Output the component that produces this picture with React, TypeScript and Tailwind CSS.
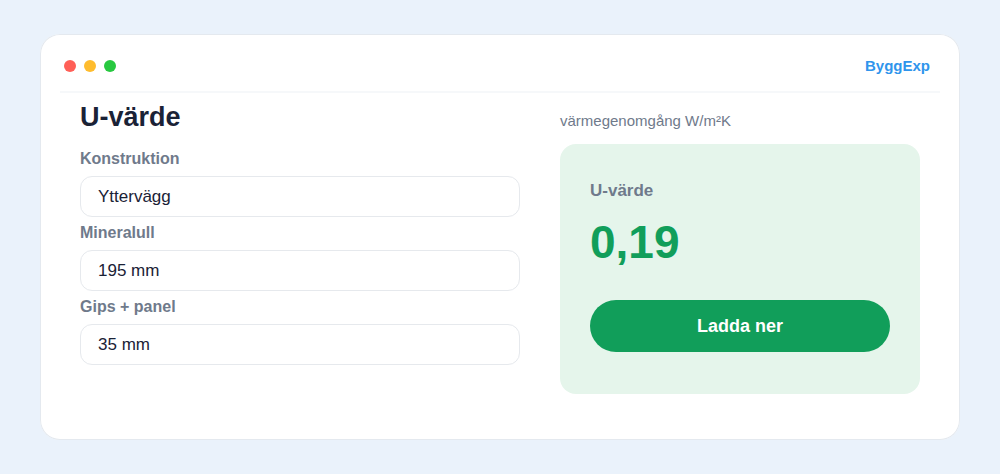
// src/App.tsx
const fields = [
  { id: "konstruktion", label: "Konstruktion", value: "Yttervägg" },
  { id: "mineralull", label: "Mineralull", value: "195 mm" },
  { id: "gips-panel", label: "Gips + panel", value: "35 mm" },
];

function WindowHeader() {
  return (
    <header className="mx-5 flex h-[59px] items-center justify-between border-b-2 border-[#f6f8fa] pt-[6px] pl-1 pr-[10px]">
      <div className="flex gap-2">
        <span className="size-3 rounded-full bg-[#ff5f57]" />
        <span className="size-3 rounded-full bg-[#febc2e]" />
        <span className="size-3 rounded-full bg-[#28c840]" />
      </div>
      <span className="text-[15px] leading-5 font-bold text-[#2f95ec]">ByggExp</span>
    </header>
  );
}

function ConstructionForm() {
  return (
    <form className="pt-2">
      <h1 className="mb-4 text-[27px] leading-8 font-bold text-[#1a2236]">U-värde</h1>
      <div className="space-y-[6px]">
        {fields.map((field) => (
          <div key={field.id}>
            <label
              htmlFor={field.id}
              className="mb-[7px] block text-base leading-5 font-bold text-[#6f7a8b]"
            >
              {field.label}
            </label>
            <input
              id={field.id}
              type="text"
              defaultValue={field.value}
              className="block h-[41px] w-full rounded-xl border border-[#e6e9ed] bg-white px-[17px] text-[17px] text-[#1a2236]"
            />
          </div>
        ))}
      </div>
    </form>
  );
}

function ResultPanel() {
  return (
    <section className="pt-[18px]">
      <p className="mb-[13px] text-[15px] leading-5 text-[#6f7a8b]">värmegenomgång W/m²K</p>
      <div className="rounded-2xl bg-[#e5f5eb] px-[30px] pt-[37px] pb-[42px]">
        <h2 className="text-[17px] leading-5 font-bold text-[#6f7a8b]">U-värde</h2>
        <p className="mt-[17px] text-[46px] leading-[48px] font-bold text-[#119e5a]">0,19</p>
        <button
          type="button"
          className="mt-[34px] h-[52px] w-full rounded-full bg-[#119e5a] text-lg font-bold text-white"
        >
          Ladda ner
        </button>
      </div>
    </section>
  );
}

export default function App() {
  return (
    <div className="min-h-screen bg-[#eaf2fb] px-10 py-[34px] font-['Liberation_Sans',Arial,sans-serif]">
      <main className="rounded-[20px] bg-white pb-[46px] ring-1 ring-[#e4e9ef] ring-inset">
        <WindowHeader />
        <div className="grid grid-cols-[11fr_9fr] gap-10 px-10">
          <ConstructionForm />
          <ResultPanel />
        </div>
      </main>
    </div>
  );
}
